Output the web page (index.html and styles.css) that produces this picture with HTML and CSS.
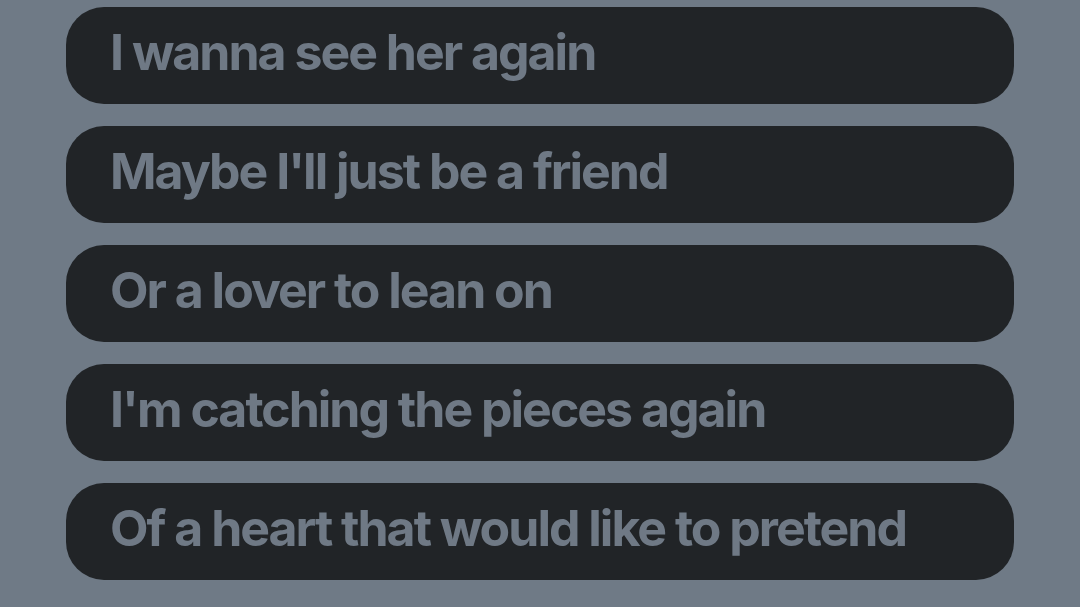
FILE: index.html
```html
<!DOCTYPE html>
<html>
<head>
<meta charset="utf-8">
<link rel="stylesheet" href="styles.css">
</head>
<body>
<div class="lyrics">
  <div class="line"><span class="text">I wanna see her again</span></div>
  <div class="line"><span class="text">Maybe I'll just be a friend</span></div>
  <div class="line"><span class="text">Or a lover to lean on</span></div>
  <div class="line"><span class="text">I'm catching the pieces again</span></div>
  <div class="line"><span class="text">Of a heart that would like to pretend</span></div>
</div>
</body>
</html>
```
FILE: styles.css
```css
html, body {
  margin: 0;
  padding: 0;
  background: #6f7a86;
  height: 100%;
  overflow: hidden;
}
.lyrics {
  display: flex;
  flex-direction: column;
  gap: 22px;
  padding: 7px 66px 0 66px;
}
.line {
  height: 97px;
  background: #212427;
  border-radius: 38px;
  display: flex;
  align-items: center;
  padding: 0 0 8px 44px;
  box-sizing: border-box;
}
.text {
  font-family: Inter, "Noto Sans", sans-serif;
  font-weight: 700;
  font-size: 50px;
  letter-spacing: -2px;
  color: #6f7985;
  white-space: nowrap;
}
```
